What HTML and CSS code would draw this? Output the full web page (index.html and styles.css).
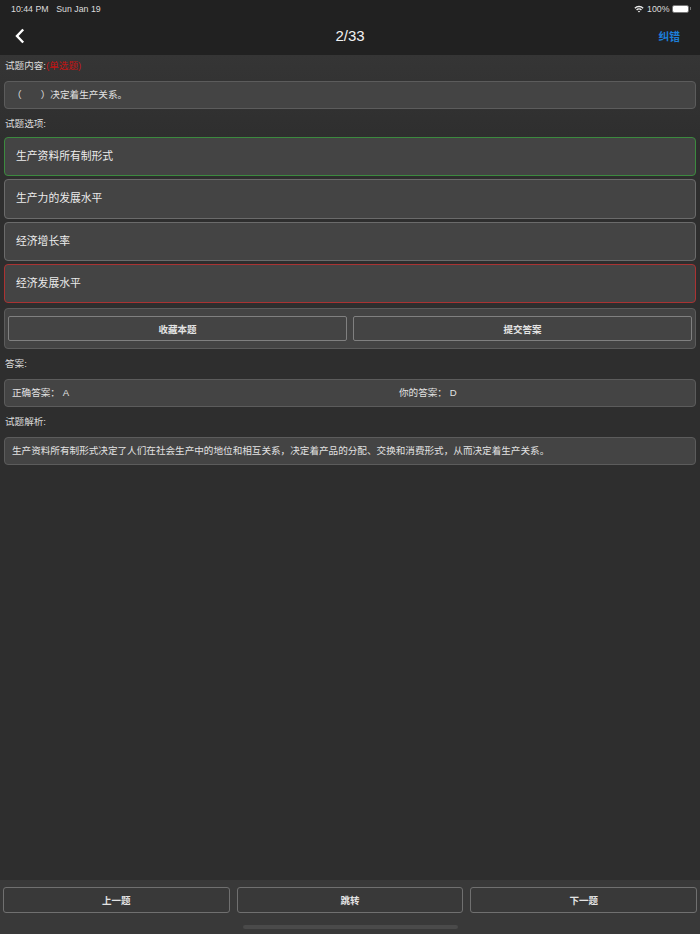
FILE: index.html
```html
<!DOCTYPE html>
<html lang="zh">
<head>
<meta charset="utf-8">
<title>2/33</title>
<link rel="stylesheet" href="styles.css">
</head>
<body>
<div class="app">
  <header class="top">
    <div class="status">
      <span class="time">10:44 PM</span><span class="date">Sun Jan 19</span>
      <span class="status-right">
        <svg class="wifi" width="10" height="8" viewBox="0 0 11 8"><path d="M.4 2.6A7.2 7.2 0 0 1 10.6 2.6L9.5 3.7A5.7 5.7 0 0 0 1.5 3.7Z" fill="#eee"/><path d="M2.3 4.5A4.5 4.5 0 0 1 8.7 4.5L7.6 5.6A3 3 0 0 0 3.4 5.6Z" fill="#eee"/><path d="M4.2 6.4A1.9 1.9 0 0 1 6.8 6.4L5.5 7.8Z" fill="#eee"/></svg>
        <span class="pct">100%</span>
        <span class="battery"><span class="battery-fill"></span></span><span class="battery-cap"></span>
      </span>
    </div>
    <nav class="nav">
      <svg class="back" width="10" height="16" viewBox="0 0 10 16"><path d="M8.2 1.5 2 8l6.2 6.5" fill="none" stroke="#fff" stroke-width="2.4"/></svg>
      <span class="title">2/33</span>
      <span class="fix">纠错</span>
    </nav>
  </header>
  <main class="content">
    <div class="label label-first">试题内容:<span class="red">(单选题)</span></div>
    <div class="box">（　　）决定着生产关系。</div>
    <div class="label label-options">试题选项:</div>
    <div class="options">
      <div class="option correct">生产资料所有制形式</div>
      <div class="option">生产力的发展水平</div>
      <div class="option">经济增长率</div>
      <div class="option wrong">经济发展水平</div>
    </div>
    <div class="actions">
      <button class="btn">收藏本题</button>
      <button class="btn">提交答案</button>
    </div>
    <div class="label label-answer">答案:</div>
    <div class="box answers">
      <span class="answer">正确答案： A</span>
      <span class="answer">你的答案： D</span>
    </div>
    <div class="label label-analysis">试题解析:</div>
    <div class="box">生产资料所有制形式决定了人们在社会生产中的地位和相互关系，决定着产品的分配、交换和消费形式，从而决定着生产关系。</div>
  </main>
  <footer class="bottom">
    <div class="bottom-row">
      <button class="btn btn-bottom">上一题</button>
      <button class="btn btn-bottom">跳转</button>
      <button class="btn btn-bottom">下一题</button>
    </div>
    <div class="home"></div>
  </footer>
</div>
</body>
</html>
```
FILE: styles.css
```css
* { box-sizing: border-box; }
html, body { margin: 0; padding: 0; }
body {
  width: 700px;
  height: 934px;
  overflow: hidden;
  background: #2f2f2f;
  color: #e4e4e4;
  font-family: "Liberation Sans", "Noto Sans CJK SC", sans-serif;
}
.app { display: flex; flex-direction: column; height: 934px; }
.top { height: 55px; background: #212121; flex: none; }
.status {
  height: 17px;
  display: flex;
  align-items: center;
  padding: 0 9.5px 0 11px;
  font-size: 8.8px;
  color: #dcdcdc;
}
.date { margin-left: 7.5px; }
.status-right { margin-left: auto; display: flex; align-items: center; }
.wifi { margin-right: 3px; }
.pct { margin-right: 2px; }
.battery {
  width: 17px;
  height: 8px;
  border: 1px solid #777;
  border-radius: 2px;
  display: block;
}
.battery-fill { display: block; height: 100%; background: #fff; border-radius: 1px; }
.battery-cap { width: 1px; height: 3px; background: #777; margin-left: 1px; }
.nav {
  height: 37px;
  display: flex;
  align-items: center;
  justify-content: space-between;
  padding: 0 20px 0 15px;
  position: relative;
}
.title {
  position: absolute;
  left: 0;
  right: 0;
  text-align: center;
  font-size: 15px;
  color: #f2f2f2;
}
.fix { font-size: 10.8px; color: #1d7ed8; font-weight: 700; }
.content {
  flex: 1;
  padding: 0 4px;
  background: linear-gradient(#353535, #2e2e2e 90px);
}
.label {
  font-size: 9.6px;
  line-height: 12px;
  height: 12px;
  margin: 9px 1px 8px;
  color: #dcdcdc;
}
.label-first { margin-top: 5px; margin-bottom: 9px; }
.label-options { margin-bottom: 7px; }
.label-answer { margin-top: 9px; margin-bottom: 9px; }
.label-analysis { margin-bottom: 9px; }
.red { color: #c21313; }
.box {
  height: 28px;
  line-height: 26px;
  padding: 0 7px;
  background: #444;
  border: 1px solid #5c5c5c;
  border-radius: 4px;
  font-size: 9.6px;
  color: #e2e2e2;
  white-space: nowrap;
}
.options { display: flex; flex-direction: column; gap: 3px; }
.option {
  height: 39.33px;
  line-height: 37px;
  padding: 0 11px;
  background: #444;
  border: 1px solid #6b6b6b;
  border-radius: 4px;
  font-size: 10.8px;
  color: #ececec;
}
.correct { border-color: #3c8a3f; }
.wrong { border-color: #aa3333; }
.actions {
  display: flex;
  gap: 6px;
  height: 41px;
  margin-top: 5px;
  padding: 7px 3px;
  background: #444;
  border: 1px solid #5c5c5c;
  border-radius: 4px;
}
.btn {
  flex: 1;
  height: 25px;
  padding: 0;
  background: #444;
  border: 1px solid #808080;
  border-radius: 2px;
  color: #e4e4e4;
  font-family: inherit;
  font-size: 9.5px;
  font-weight: 700;
}
.answers { display: flex; }
.answer { flex: none; width: 387px; white-space: pre; }
.answer + .answer { flex: 1; width: auto; }
.bottom { height: 54px; flex: none; background: #393939; padding-top: 7px; }
.bottom-row { display: flex; gap: 7px; padding: 0 3px; }
.btn-bottom { background: #393939; height: 26px; border-color: #707070; border-radius: 3px; }
.home { width: 215px; height: 4px; border-radius: 2px; background: #4a4a4a; margin: 12px auto 0; }
```
